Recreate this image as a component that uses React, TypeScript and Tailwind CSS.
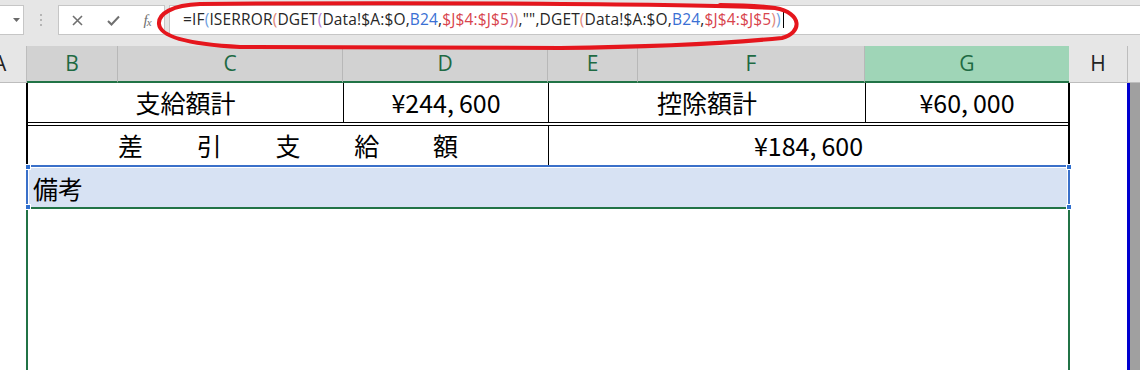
import React from 'react';

const headers = [
  { label: 'A', w: 'w-[27px]', kind: 'plain' },
  { label: 'B', w: 'w-[91px]', kind: 'sel' },
  { label: 'C', w: 'w-[225px]', kind: 'sel' },
  { label: 'D', w: 'w-[205px]', kind: 'sel' },
  { label: 'E', w: 'w-[90px]', kind: 'sel' },
  { label: 'F', w: 'w-[227px]', kind: 'sel' },
  { label: 'G', w: 'w-[204px]', kind: 'active' },
  { label: 'H', w: 'w-[59px]', kind: 'plain' },
];

const L1 = 'text-[#6f9fe0]';
const L2 = 'text-[#e0887c]';
const L3 = 'text-[#b47fcf]';
const REF = 'text-[#3a6fd4]';
const RNG = 'text-[#d8434c]';
const TXT = 'text-[#262626]';

const formula: [string, string][] = [
  ['=IF', TXT],
  ['(', L1],
  ['ISERROR', TXT],
  ['(', L2],
  ['DGET', TXT],
  ['(', L3],
  ['Data!$A:$O,', TXT],
  ['B24', REF],
  [',', TXT],
  ['$J$4:$J$5', RNG],
  [')', L3],
  [')', L2],
  [',"",DGET', TXT],
  ['(', L2],
  ['Data!$A:$O,', TXT],
  ['B24', REF],
  [',', TXT],
  ['$J$4:$J$5', RNG],
  [')', L2],
  [')', L1],
];

function FormulaBar() {
  return (
    <div className="relative h-[46px] bg-[#e6e6e6] flex items-start pt-[5px]">
      {/* name box */}
      <div className="w-[24px] h-[30px] bg-white border border-l-0 border-[#c6c6c6] flex items-center justify-end pr-[3px]">
        <svg width="7" height="4" viewBox="0 0 7 4">
          <path d="M0 0 L7 0 L3.5 4 Z" fill="#6a6a6a" />
        </svg>
      </div>
      <div className="w-[34px] h-[30px] flex flex-col items-center justify-center gap-[3px]">
        <span className="w-[2px] h-[2px] bg-[#b5b5b5]" />
        <span className="w-[2px] h-[2px] bg-[#b5b5b5]" />
        <span className="w-[2px] h-[2px] bg-[#b5b5b5]" />
      </div>
      {/* cancel / enter / fx */}
      <div className="w-[107px] h-[30px] bg-white border border-[#c6c6c6] flex items-center">
        <div className="w-[37px] flex justify-center">
          <svg width="11" height="11" viewBox="0 0 11 11">
            <path d="M1 1 L10 10 M10 1 L1 10" stroke="#707070" strokeWidth="1.6" />
          </svg>
        </div>
        <div className="w-[35px] flex justify-center">
          <svg width="13" height="11" viewBox="0 0 13 11">
            <path d="M1 6 L4.5 9.5 L12 1.5" stroke="#707070" strokeWidth="2" fill="none" />
          </svg>
        </div>
        <div className="w-[33px] flex justify-center text-[#707070] font-['Liberation_Serif',serif] italic text-[15px] leading-none">
          f<span className="text-[11px] -ml-[1px] mt-[4px]">x</span>
        </div>
      </div>
      <div className="w-[4px]" />
      <div className="flex-1 h-[30px] bg-white border border-r-0 border-[#c6c6c6] flex items-center pl-[13px] font-['Open_Sans',sans-serif] text-[15.5px] tracking-[0.15px] whitespace-nowrap">
        {formula.map(([t, c], i) => (
          <span key={i} className={c}>{t}</span>
        ))}
        <span className="ml-[2px] w-px h-[16px] bg-black" />
      </div>
      {/* hand-drawn red loop */}
      <svg className="absolute left-0 top-0 pointer-events-none" width="1140" height="60" viewBox="0 0 1140 60">
        <path
          d="M775 8 C700 4 420 2 200 4 C172 5 158 14 159 24 C160 36 185 44 240 47 L560 48 C650 47 730 43 782 38 C802 33 803 13 775 8 C760 6 740 5 720 5"
          fill="none"
          stroke="#e5161d"
          strokeWidth="4"
          strokeLinecap="round"
        />
      </svg>
    </div>
  );
}

function ColumnHeaders() {
  return (
    <div className="flex h-[37px] bg-[#e6e6e6] font-['Open_Sans',sans-serif] text-[21px]">
      {headers.map((h) => (
        <div
          key={h.label}
          className={
            h.label === 'A'
              ? `${h.w} flex items-center justify-start text-[#222] border-r border-b border-[#bdbdbd] bg-[#e6e6e6]`
              : h.kind === 'plain'
              ? `${h.w} flex items-center justify-center text-[#222] border-r border-b border-[#bdbdbd] bg-[#e6e6e6]`
              : h.kind === 'active'
              ? `${h.w} flex items-center justify-center text-[#1e6a43] bg-[#9fd5b7] border-b-2 border-[#217346]`
              : `${h.w} flex items-center justify-center text-[#1e6a43] bg-[#d2d2d2] border-r border-r-[#b8b8b8] border-b-2 border-b-[#217346]`
          }
        >
          <span className={h.label === 'A' ? '-ml-[7px]' : ''}>{h.label}</span>
        </div>
      ))}
      <div className="flex-1 border-b border-[#bdbdbd]" />
    </div>
  );
}

function Handle({ pos }: { pos: string }) {
  return <span className={`absolute w-[6px] h-[6px] bg-[#2f6fcf] border border-white ${pos}`} />;
}

function Sheet() {
  const cell = "flex items-center justify-center h-full";
  return (
    <div className="flex h-[287px] font-['Noto_Sans_CJK_JP',sans-serif] text-[25px] leading-none text-black">
      <div className="w-[26px]" />
      <div className="w-[1044px] flex flex-col">
        {/* row 1 */}
        <div className="flex h-[40px] border-x-2 border-b border-black">
          <div className={`${cell} w-[316px] border-r border-black`}>支給額計</div>
          <div className={`${cell} w-[205px] border-r border-black`}>
            ¥244,<span className="ml-[5px]">600</span>
          </div>
          <div className={`${cell} w-[317px] border-r border-black`}>控除額計</div>
          <div className={`${cell} w-[202px]`}>
            ¥60,<span className="ml-[5px]">000</span>
          </div>
        </div>
        <div className="h-[2px] border-x-2 border-black" />
        {/* row 2 */}
        <div className="flex h-[40px] border-x-2 border-t border-black">
          <div className="flex items-center justify-between h-full w-[521px] px-[90px] border-r border-black">
            <span>差</span>
            <span>引</span>
            <span>支</span>
            <span>給</span>
            <span>額</span>
          </div>
          <div className={`${cell} w-[519px]`}>
            ¥184,<span className="ml-[5px]">600</span>
          </div>
        </div>
        {/* selected row */}
        <div className="relative h-[44px] border-x-2 border-t-2 border-[#3a70c9] border-b-2 border-b-[#217346]">
          <div className="h-full pl-px pr-px pt-px">
            <div className="h-full bg-[#d7e2f3] flex items-center pl-[4px] pt-[2px]">備考</div>
          </div>
          <Handle pos="-left-[3px] -top-[3px]" />
          <Handle pos="-right-[4px] -top-[3px]" />
          <Handle pos="-left-[3px] -bottom-[3px]" />
          <Handle pos="-right-[4px] -bottom-[3px]" />
        </div>
        <div className="flex-1 border-x-2 border-[#217346]" />
      </div>
      <div className="w-[57px]" />
      <div className="w-[3px] bg-[#0000cf]" />
      <div className="flex-1 bg-[#a0a0a0]" />
    </div>
  );
}

export default function App() {
  return (
    <div className="w-[1140px] h-[370px] overflow-hidden bg-white">
      <FormulaBar />
      <ColumnHeaders />
      <Sheet />
    </div>
  );
}
